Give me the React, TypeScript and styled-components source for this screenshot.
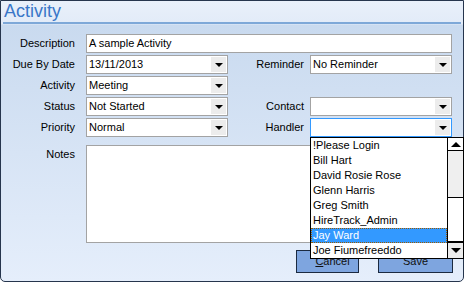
import React from 'react'
import styled, { createGlobalStyle } from 'styled-components'

const GlobalStyle = createGlobalStyle`
  html, body {
    margin: 0;
    padding: 0;
    background: #ffffff;
  }
  * {
    box-sizing: border-box;
  }
  body {
    font-family: 'Liberation Sans', Arial, sans-serif;
    font-size: 11px;
    color: #000;
  }
`

const handlers = [
  '!Please Login',
  'Bill Hart',
  'David Rosie Rose',
  'Glenn Harris',
  'Greg Smith',
  'HireTrack_Admin',
  'Jay Ward',
  'Joe Fiumefreeddo',
]

const Select = ({ value, focused, children }: any) => (
  <Field focused={focused}>
    <FieldText>{value}</FieldText>
    <ArrowBox>
      <Arrow />
    </ArrowBox>
    {children}
  </Field>
)

export default function App() {
  return (
    <>
      <GlobalStyle />
      <Window>
        <Title>Activity</Title>
        <Form>
          <Label>Description</Label>
          <Field span>
            <FieldText>A sample Activity</FieldText>
          </Field>

          <Label>Due By Date</Label>
          <Select value='13/11/2013' />
          <Label narrow>Reminder</Label>
          <Select value='No Reminder' />

          <Label>Activity</Label>
          <Select value='Meeting' />
          <Label narrow />
          <div />

          <Label>Status</Label>
          <Select value='Not Started' />
          <Label narrow>Contact</Label>
          <Select value='' />

          <Label>Priority</Label>
          <Select value='Normal' />
          <Label narrow>Handler</Label>
          <Select value='' focused>
            <DropList>
              <Items>
                {handlers.map((name) => (
                  <Item key={name} selected={name === 'Jay Ward'}>
                    {name}
                  </Item>
                ))}
              </Items>
              <ScrollBar>
                <ScrollButton>
                  <UpArrow />
                </ScrollButton>
                <Thumb />
                <Track />
                <ScrollButton down>
                  <Arrow big />
                </ScrollButton>
              </ScrollBar>
            </DropList>
          </Select>

          <NotesLabel>Notes</NotesLabel>
          <Notes />
        </Form>
        <Buttons>
          <Button width={63} indent={10}>
            <u>C</u>ancel
          </Button>
          <Button width={75}>Save</Button>
        </Buttons>
      </Window>
    </>
  )
}

const Window = styled.div`
  width: 464px;
  height: 282px;
  border: 1px solid #26354d;
  border-radius: 0 0 5px 5px;
  background: linear-gradient(
    to bottom,
    #e9f0fa 0px,
    #e2ebf8 23px,
    #c9daef 24px,
    #e5eefb 100%
  );
`

const Title = styled.div`
  height: 23px;
  margin: 0 2px;
  padding: 0 0 0 1px;
  font-size: 18px;
  line-height: 21px;
  color: #3a77c8;
  border-bottom: 2px solid #7ea8d8;
`

const Form = styled.div`
  display: grid;
  grid-template-columns: 85px 142px 82px 142px;
  grid-template-rows: repeat(5, 19px) 104px;
  row-gap: 2px;
  margin-top: 10px;
`

const Label = styled.div<{ narrow?: boolean }>`
  line-height: 19px;
  text-align: right;
  white-space: nowrap;
  padding-right: ${(p) => (p.narrow ? '6px' : '11px')};
`

const NotesLabel = styled(Label)`
  margin-top: 6px;
`

const Field = styled.div<{ span?: boolean; focused?: boolean }>`
  position: relative;
  display: flex;
  align-items: stretch;
  height: 19px;
  background: #ffffff;
  border: 1px solid ${(p) => (p.focused ? '#3399ff' : '#a3a3a3')};
  grid-column: ${(p) => (p.span ? '2 / 5' : 'auto')};
`

const FieldText = styled.div`
  flex: 1;
  padding-left: 2px;
  line-height: 17px;
  white-space: nowrap;
`

const ArrowBox = styled.div`
  width: 15px;
  margin: 1px;
  background: #ececec;
  display: flex;
  align-items: center;
  justify-content: center;
`

const Arrow = styled.span<{ big?: boolean }>`
  width: 0;
  height: 0;
  border-left: ${(p) => (p.big ? '5px' : '4px')} solid transparent;
  border-right: ${(p) => (p.big ? '5px' : '4px')} solid transparent;
  border-top: ${(p) => (p.big ? '5px' : '4px')} solid #000;
`

const UpArrow = styled.span`
  width: 0;
  height: 0;
  border-left: 5px solid transparent;
  border-right: 5px solid transparent;
  border-bottom: 5px solid #000;
`

const DropList = styled.div`
  position: absolute;
  top: 18px;
  left: -1px;
  width: 154px;
  height: 122px;
  display: flex;
  background: #ffffff;
  border: 1px solid #000;
  z-index: 2;
`

const Items = styled.div`
  flex: 1;
  display: flex;
  flex-direction: column;
`

const Item = styled.div<{ selected?: boolean }>`
  height: 15px;
  line-height: 15px;
  padding-left: 2px;
  white-space: nowrap;
  color: ${(p) => (p.selected ? '#ffffff' : '#000')};
  background: ${(p) => (p.selected ? '#3399ff' : 'transparent')};
  outline: ${(p) => (p.selected ? '1px dotted #9a5a00' : 'none')};
  outline-offset: -1px;
`

const ScrollBar = styled.div`
  width: 16px;
  display: flex;
  flex-direction: column;
  border-left: 1px solid #000;
`

const ScrollButton = styled.div<{ down?: boolean }>`
  height: ${(p) => (p.down ? '17px' : '13px')};
  display: flex;
  align-items: center;
  justify-content: center;
  background: ${(p) => (p.down ? '#ececec' : '#ffffff')};
  border-top: ${(p) => (p.down ? '2px solid #000' : 'none')};
  border-bottom: ${(p) => (p.down ? 'none' : '1px solid #000')};
`

const Thumb = styled.div`
  height: 47px;
  background: #efefef;
  border-bottom: 1px solid #000;
`

const Track = styled.div`
  flex: 1;
  background: #ffffff;
`

const Notes = styled.div`
  grid-column: 2 / 5;
  margin-top: 6px;
  height: 98px;
  background: #ffffff;
  border: 1px solid #a3a3a3;
`

const Buttons = styled.div`
  display: flex;
  justify-content: flex-end;
  gap: 19px;
  padding-right: 10px;
  margin-top: 7px;
`

const Button = styled.div<{ width: number; indent?: number }>`
  width: ${(p) => p.width}px;
  height: 23px;
  line-height: 21px;
  text-align: center;
  padding-left: ${(p) => p.indent || 0}px;
  background: #7ea5df;
  border: 1px solid #1b2a40;
  color: #111;
`
